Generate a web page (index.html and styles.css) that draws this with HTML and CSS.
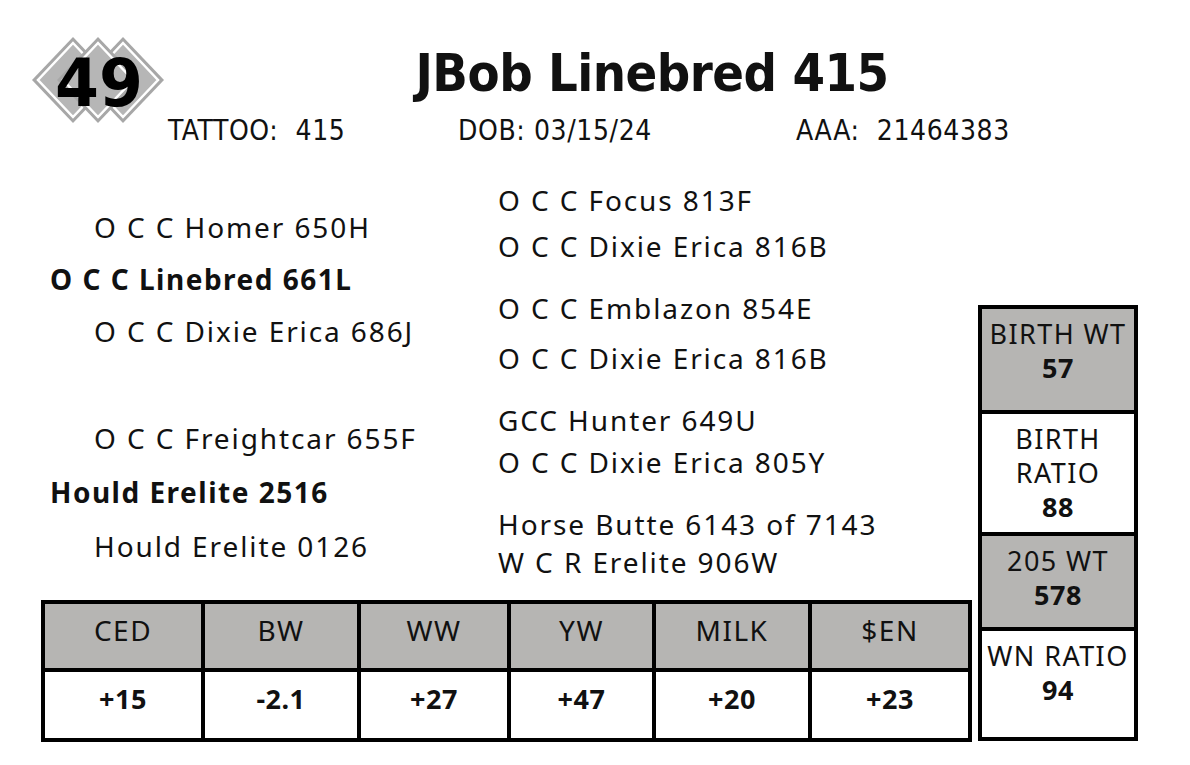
FILE: index.html
```html
<!DOCTYPE html>
<html lang="en">
<head>
    <meta charset="UTF-8">
    <meta name="viewport" content="width=device-width, initial-scale=1.0">
    <title>Lot 49 - JBob Linebred 415</title>
    <link rel="stylesheet" href="styles.css">
</head>
<body>

    <div class="sheet">
        <header class="top">
            <svg class="lot-badge" width="140" height="90" viewBox="0 0 140 90" aria-label="Lot 49">
                <g class="diamond">
                    <polygon points="45,2 86,45 45,88 4,45" fill="#a7a7a7"/>
                    <polygon points="45,8 80,45 45,82 10,45" fill="#b6b6b6" stroke="#fff" stroke-width="2.5"/>
                </g>
                <g class="diamond">
                    <polygon points="95,2 136,45 95,88 54,45" fill="#a7a7a7"/>
                    <polygon points="95,8 130,45 95,82 60,45" fill="#b6b6b6" stroke="#fff" stroke-width="2.5"/>
                </g>
                <g class="diamond">
                    <polygon points="70,2 111,45 70,88 29,45" fill="#a7a7a7"/>
                    <polygon points="70,8 105,45 70,82 35,45" fill="#b6b6b6" stroke="#fff" stroke-width="2.5"/>
                </g>
                <text x="71" y="71" text-anchor="middle" class="lot-number" textLength="88" lengthAdjust="spacingAndGlyphs">49</text>
            </svg>
            <div class="head">
                <h1>JBob Linebred 415</h1>
                <div class="info">
                    <span class="tattoo">TATTOO:&nbsp; 415</span>
                    <span class="dob">DOB: 03/15/24</span>
                    <span class="aaa">AAA:&nbsp; 21464383</span>
                </div>
            </div>
        </header>

        <div class="main">
            <div class="left">
                <div class="pedigree">
                    <div class="parents">
                        <div class="group">
                            <p class="gp">O C C Homer 650H</p>
                            <p class="parent">O C C Linebred 661L</p>
                            <p class="gp">O C C Dixie Erica 686J</p>
                        </div>
                        <div class="group dam-side">
                            <p class="gp">O C C Freightcar 655F</p>
                            <p class="parent">Hould Erelite 2516</p>
                            <p class="gp">Hould Erelite 0126</p>
                        </div>
                    </div>
                    <div class="ancestors">
                        <div class="pair">
                            <p>O C C Focus 813F</p>
                            <p>O C C Dixie Erica 816B</p>
                        </div>
                        <div class="pair">
                            <p>O C C Emblazon 854E</p>
                            <p>O C C Dixie Erica 816B</p>
                        </div>
                        <div class="pair">
                            <p>GCC Hunter 649U</p>
                            <p>O C C Dixie Erica 805Y</p>
                        </div>
                        <div class="pair">
                            <p>Horse Butte 6143 of 7143</p>
                            <p>W C R Erelite 906W</p>
                        </div>
                    </div>
                </div>

                <div class="epd">
                    <div class="th">CED</div>
                    <div class="th">BW</div>
                    <div class="th">WW</div>
                    <div class="th">YW</div>
                    <div class="th">MILK</div>
                    <div class="th">$EN</div>
                    <div class="td">+15</div>
                    <div class="td">-2.1</div>
                    <div class="td">+27</div>
                    <div class="td">+47</div>
                    <div class="td">+20</div>
                    <div class="td">+23</div>
                </div>
            </div>

            <div class="stats">
                <div class="stat shaded">BIRTH WT<b>57</b></div>
                <div class="stat">BIRTH<br>RATIO<b>88</b></div>
                <div class="stat shaded">205 WT<b>578</b></div>
                <div class="stat">WN RATIO<b>94</b></div>
            </div>
        </div>
    </div>

</body>
</html>
```

FILE: styles.css
```css
body {
    margin: 0;
    padding: 0;
    background-color: #fff;
    color: #111;
    font-family: 'Noto Sans', 'DejaVu Sans', sans-serif;
}

p {
    margin: 0;
}

.sheet {
    width: 1190px;
    height: 765px;
    overflow: hidden;
}

/* header */

.top {
    display: flex;
}

.lot-badge {
    display: block;
    margin-left: 28px;
    margin-top: 35px;
}

.lot-number {
    font-family: 'DejaVu Sans', sans-serif;
    font-weight: bold;
    font-size: 66px;
    fill: #000;
}

.head {
    width: 968px;
}

.head h1 {
    margin: 48px 0 0 0;
    text-align: center;
    font-family: 'DejaVu Sans Condensed', 'DejaVu Sans', sans-serif;
    font-weight: bold;
    font-size: 52px;
    line-height: 50px;
    letter-spacing: -0.5px;
}

.info {
    display: flex;
    margin-top: 18px;
    font-family: 'DejaVu Sans Condensed', 'DejaVu Sans', sans-serif;
    font-size: 28px;
    line-height: 30px;
    letter-spacing: 0.6px;
}

.info .tattoo {
    width: 290px;
}

.info .dob {
    width: 338px;
}

/* pedigree + tables */

.main {
    display: flex;
    align-items: flex-end;
    gap: 6px;
    padding-left: 41px;
    margin-top: 31px;
}

.left {
    width: 931px;
}

.pedigree {
    display: flex;
    font-size: 28px;
    letter-spacing: 1.9px;
    height: 404px;
    margin-bottom: 19px;
}

.parents {
    width: 448px;
    padding-top: 24px;
    padding-left: 9px;
}

.group p {
    line-height: 52px;
}

.dam-side {
    margin-top: 54px;
}

.dam-side p {
    line-height: 54px;
}

.gp {
    padding-left: 44px;
}

.parent {
    font-weight: bold;
    letter-spacing: 1.5px;
}

.pair:nth-child(1) p {
    line-height: 46px;
}

.pair:nth-child(2) {
    margin-top: 14px;
}

.pair:nth-child(2) p {
    line-height: 50px;
}

.pair:nth-child(3) {
    margin-top: 16px;
}

.pair:nth-child(3) p {
    line-height: 42px;
}

.pair:nth-child(4) {
    margin-top: 22px;
}

.pair:nth-child(4) p {
    line-height: 38px;
}

.epd {
    display: grid;
    grid-template-columns: 156px 152px 146px 141px 152px 156px;
    grid-template-rows: 64px 66px;
    gap: 4px;
    padding: 4px;
    background-color: #000;
    font-size: 28px;
    text-align: center;
}

.th {
    background-color: #b6b5b3;
    padding-top: 11px;
    line-height: 30px;
    letter-spacing: 1.5px;
}

.td {
    background-color: #fff;
    padding-top: 12px;
    line-height: 30px;
    font-weight: bold;
    font-size: 27px;
    letter-spacing: 0.5px;
}

.stats {
    display: grid;
    grid-template-columns: 152px;
    grid-template-rows: 101px 118px 91px 106px;
    gap: 4px;
    padding: 4px;
    background-color: #000;
    font-size: 27px;
    line-height: 34px;
    letter-spacing: 1.4px;
    text-align: center;
    margin-bottom: 1px;
}

.stat {
    background-color: #fff;
    padding-top: 8px;
}

.stat.shaded {
    background-color: #b6b5b3;
}

.stat b {
    display: block;
    letter-spacing: 0.5px;
}
```
